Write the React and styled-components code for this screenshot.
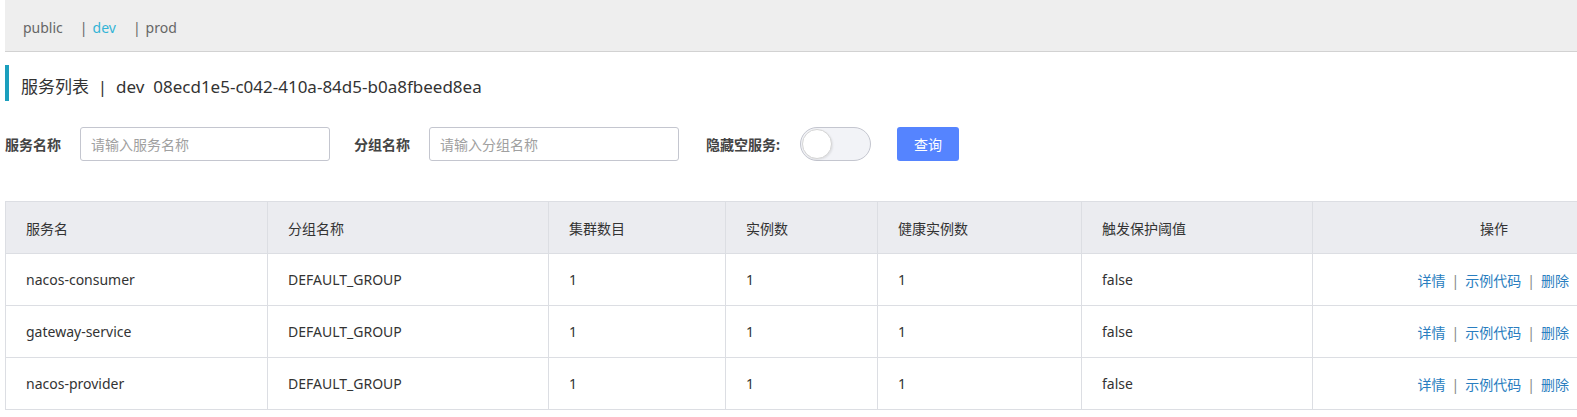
import React from 'react';
import styled, { createGlobalStyle } from 'styled-components';

const GlobalStyle = createGlobalStyle`
  body {
    margin: 0;
    background: #fff;
    font-family: "Noto Sans", "Noto Sans CJK SC", sans-serif;
    color: #333;
    overflow: hidden;
  }
`;

const Page = styled.div`
  padding-left: 5px;
  width: 1600px;
`;

const NamespaceBar = styled.div`
  box-sizing: border-box;
  height: 52px;
  background: #eeeeee;
  border-bottom: 1px solid #d2d2d2;
  display: flex;
  align-items: center;
  padding: 3px 0 0 18px;
  font-size: 14px;
`;

const NsItem = styled.span`
  color: ${p => (p.active ? '#33b4d6' : '#666')};
  margin-right: 17px;
`;

const NsSep = styled.span`
  color: #666;
  margin-right: 5px;
`;

const Title = styled.div`
  margin-top: 13px;
  height: 36px;
  display: flex;
  align-items: center;
  border-left: 4px solid #1b9fbd;
  padding: 4px 0 0 12px;
  box-sizing: border-box;
  font-size: 17px;
  color: #333;
`;

const Filters = styled.div`
  margin-top: 26px;
  display: flex;
  align-items: center;
  height: 34px;
`;

const Label = styled.span`
  font-size: 14px;
  font-weight: bold;
  color: #444;
  width: ${p => p.w}px;
  flex-shrink: 0;
`;

const Input = styled.input`
  box-sizing: border-box;
  width: 250px;
  height: 34px;
  border: 1px solid #c4c6cf;
  border-radius: 3px;
  padding: 0 10px;
  font-size: 14px;
  font-family: inherit;
  margin-right: ${p => p.gap}px;
  &::placeholder { color: #a0a0a0; }
`;

const Switch = styled.div`
  box-sizing: border-box;
  width: 71px;
  height: 34px;
  border-radius: 17px;
  background: #f2f3f7;
  border: 1px solid #c4c6cf;
  margin-right: 26px;
  position: relative;
`;

const Knob = styled.div`
  position: absolute;
  left: 1px;
  top: 1px;
  width: 30px;
  height: 30px;
  border-radius: 50%;
  background: #fff;
  border: 1px solid #d5d5d5;
  box-sizing: border-box;
  box-shadow: 1px 1px 2px rgba(0,0,0,0.08);
`;

const Button = styled.button`
  width: 62px;
  height: 34px;
  background: #5584ff;
  border: none;
  border-radius: 3px;
  color: #fff;
  font-size: 14px;
  font-family: inherit;
`;

const Table = styled.table`
  margin-top: 40px;
  border-collapse: collapse;
  width: 1575px;
  table-layout: fixed;
  font-size: 14px;
  border-left: 1px solid #dcdee3;
`;

const Th = styled.th`
  height: 51px;
  background: #ebecf0;
  border: 1px solid #dcdee3;
  font-weight: normal;
  text-align: ${p => p.align || 'left'};
  padding: 0 ${p => p.pr || 20}px 0 20px;
  color: #333;
`;

const Td = styled.td`
  height: 51px;
  border: 1px solid #dcdee3;
  text-align: ${p => p.align || 'left'};
  padding: 0 ${p => p.pr || 20}px 0 20px;
  color: #333;
`;

const Link = styled.a`
  color: #2a7ec0;
  text-decoration: none;
`;

const LinkSep = styled.span`
  color: #888;
  margin: 0 6px;
`;

const columns = [
  { title: '服务名', width: 262 },
  { title: '分组名称', width: 281 },
  { title: '集群数目', width: 177 },
  { title: '实例数', width: 152 },
  { title: '健康实例数', width: 204 },
  { title: '触发保护阈值', width: 231 },
  { title: '操作', width: 268, align: 'right', pr: 72 },
];

const rows = [
  ['nacos-consumer', 'DEFAULT_GROUP', 1, 1, 1, 'false'],
  ['gateway-service', 'DEFAULT_GROUP', 1, 1, 1, 'false'],
  ['nacos-provider', 'DEFAULT_GROUP', 1, 1, 1, 'false'],
];

export default function App() {
  return (
    <Page>
      <GlobalStyle />
      <NamespaceBar>
        <NsItem>public</NsItem>
        <NsSep>|</NsSep>
        <NsItem active>dev</NsItem>
        <NsSep>|</NsSep>
        <NsItem>prod</NsItem>
      </NamespaceBar>
      <Title>服务列表&nbsp;&nbsp;|&nbsp;&nbsp;dev&nbsp;&nbsp;08ecd1e5-c042-410a-84d5-b0a8fbeed8ea</Title>
      <Filters>
        <Label w={75}>服务名称</Label>
        <Input gap={24} placeholder="请输入服务名称" />
        <Label w={75}>分组名称</Label>
        <Input gap={27} placeholder="请输入分组名称" />
        <Label w={94}>隐藏空服务:</Label>
        <Switch><Knob /></Switch>
        <Button>查询</Button>
      </Filters>
      <Table>
        <colgroup>
          {columns.map(c => <col key={c.title} style={{ width: c.width }} />)}
        </colgroup>
        <thead>
          <tr>
            {columns.map(c => <Th key={c.title} align={c.align} pr={c.pr}>{c.title}</Th>)}
          </tr>
        </thead>
        <tbody>
          {rows.map(r => (
            <tr key={r[0]}>
              {r.map((v, i) => <Td key={i}>{v}</Td>)}
              <Td align="right" pr={11}>
                <Link>详情</Link><LinkSep>|</LinkSep>
                <Link>示例代码</Link><LinkSep>|</LinkSep>
                <Link>删除</Link>
              </Td>
            </tr>
          ))}
        </tbody>
      </Table>
    </Page>
  );
}
